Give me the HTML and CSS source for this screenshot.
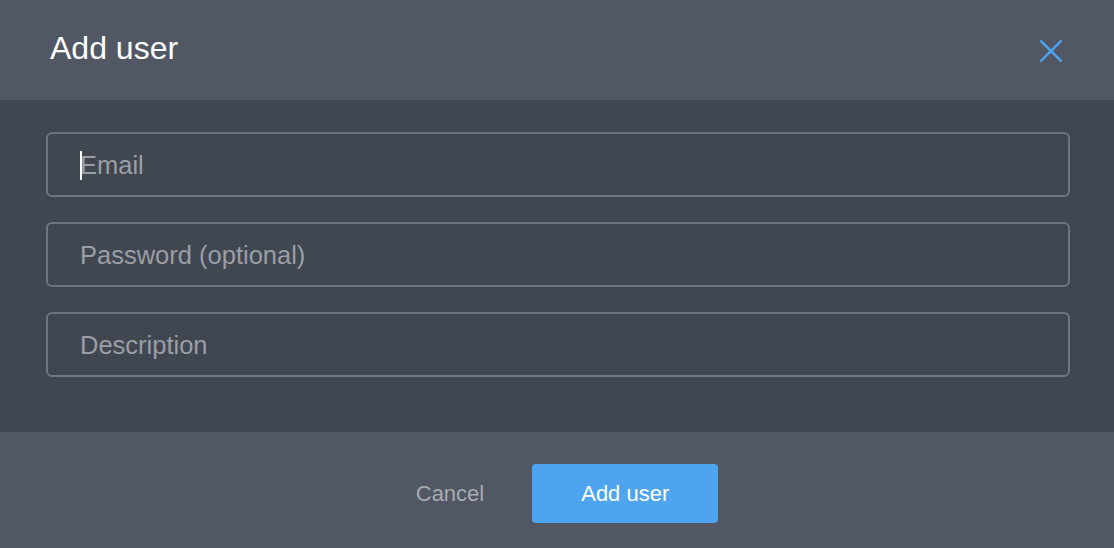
FILE: index.html
```html
<!DOCTYPE html>
<html lang="en">
<head>
<meta charset="utf-8">
<title>Add user</title>
<link rel="stylesheet" href="styles.css">
</head>
<body>
<div class="modal">
  <header class="modal-header">
    <h1 class="modal-title">Add user</h1>
    <button class="close-btn" aria-label="Close">
      <svg width="22" height="22" viewBox="0 0 22 22" aria-hidden="true">
        <path d="M1.3 1.3 L20.7 20.7 M20.7 1.3 L1.3 20.7" stroke="#4ea4ee" stroke-width="2.5" stroke-linecap="round" fill="none"/>
      </svg>
    </button>
  </header>
  <div class="modal-body">
    <label class="field">
      <input class="field-input" type="text" placeholder="Email">
      <span class="caret"></span>
    </label>
    <label class="field">
      <input class="field-input" type="password" placeholder="Password (optional)">
    </label>
    <label class="field">
      <input class="field-input" type="text" placeholder="Description">
    </label>
  </div>
  <footer class="modal-footer">
    <button class="btn-cancel">Cancel</button>
    <button class="btn-primary">Add user</button>
  </footer>
</div>
</body>
</html>
```

FILE: styles.css
```css
* { box-sizing: border-box; }
html, body {
  margin: 0;
  padding: 0;
  background: #515763;
  font-family: "Liberation Sans", Arial, sans-serif;
}
.modal {
  width: 1114px;
  height: 548px;
  display: flex;
  flex-direction: column;
}
.modal-header {
  height: 100px;
  background: #515763;
  display: flex;
  align-items: center;
  justify-content: space-between;
  padding: 0 52px 0 50px;
}
.modal-title {
  margin: 0;
  font-size: 32px;
  font-weight: 400;
  color: #ffffff;
  line-height: 1;
  position: relative;
  top: -2px;
}
.close-btn {
  background: none;
  border: 0;
  padding: 0;
  width: 22px;
  height: 22px;
  display: flex;
  cursor: pointer;
  position: relative;
  top: 1px;
}
.modal-body {
  background: #414750;
  height: 332px;
  padding: 32px 44px 0 46px;
  display: flex;
  flex-direction: column;
  gap: 25px;
}
.field {
  position: relative;
  display: block;
}
.field-input {
  display: block;
  width: 100%;
  height: 65px;
  background: transparent;
  border: 2px solid #6f747d;
  border-radius: 6px;
  padding: 2px 32px 0;
  font-family: "Liberation Sans", Arial, sans-serif;
  font-size: 25.5px;
  color: #ffffff;
  outline: none;
}
.field-input::placeholder {
  color: #9a9ea6;
  opacity: 1;
}
.caret {
  position: absolute;
  left: 34px;
  top: 19px;
  width: 2px;
  height: 29px;
  background: #ffffff;
}
.modal-footer {
  flex: 1;
  background: #515763;
  display: flex;
  align-items: center;
  justify-content: center;
  gap: 24px;
  padding: 7px 4px 0 0;
}
.btn-cancel {
  background: none;
  border: 0;
  padding: 0 24px;
  font-family: "Liberation Sans", Arial, sans-serif;
  font-size: 22px;
  color: #a7abb2;
  cursor: pointer;
  height: 59px;
}
.btn-primary {
  width: 186px;
  height: 59px;
  border: 0;
  border-radius: 4px;
  background: #4ea4ee;
  color: #ffffff;
  font-family: "Liberation Sans", Arial, sans-serif;
  font-size: 22px;
  cursor: pointer;
}
```
